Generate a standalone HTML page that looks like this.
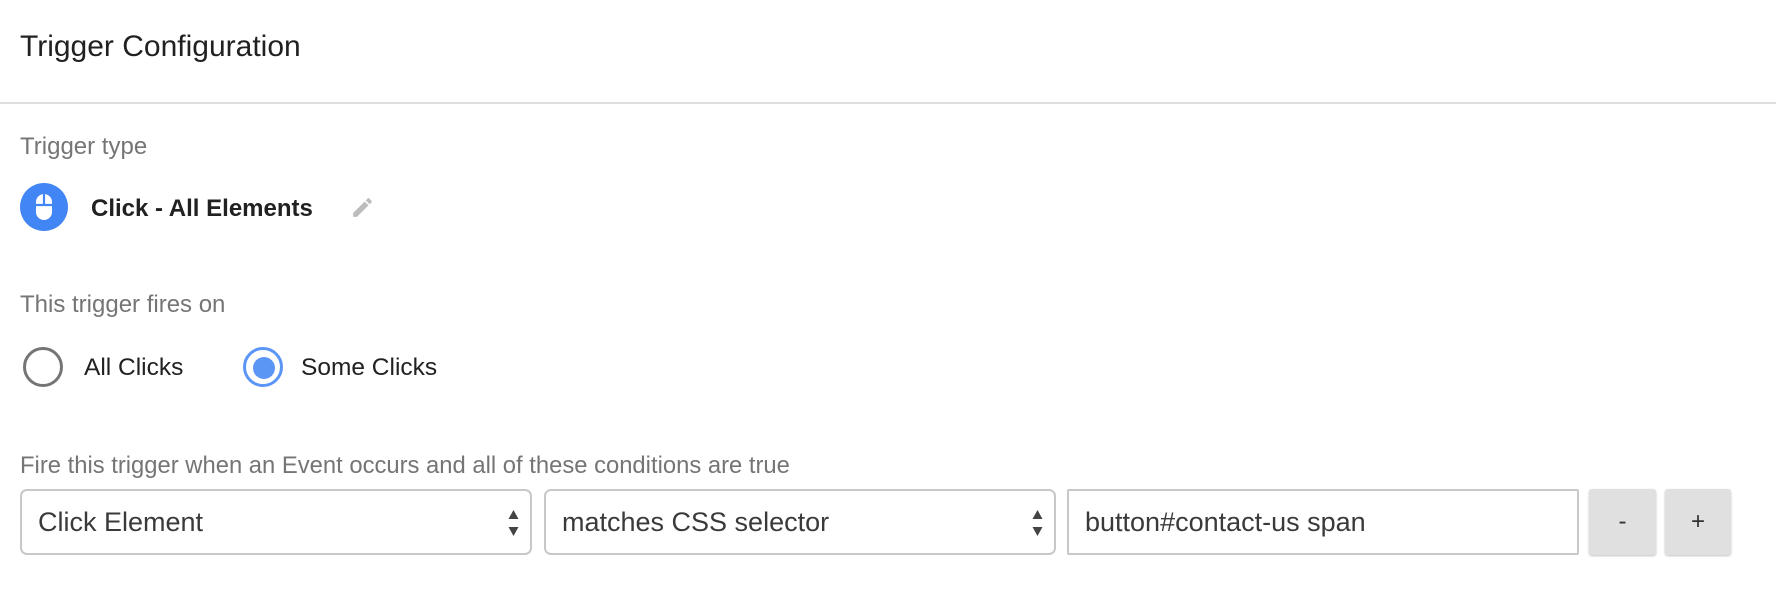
<!DOCTYPE html>
<html><head><meta charset="utf-8"><style>
body{margin:0;width:1776px;height:592px;background:#fff;font-family:"Liberation Sans",sans-serif;position:relative;overflow:hidden}
.a{position:absolute;white-space:nowrap}
.lbl{color:#757575;font-size:24px}
.box{position:absolute;top:489px;height:62px;border:2px solid #c8c8c8;border-radius:7px;background:#fff;box-sizing:content-box}
.box span{position:absolute;left:16px;top:16px;font-size:27px;color:#3a3a3a}
.arr{position:absolute;right:10px;top:17px;width:13px}
.btn{position:absolute;top:489px;height:66px;background:#e0e0e0;border-radius:3px;box-shadow:0 1px 2px rgba(0,0,0,.25);text-align:center;line-height:66px;font-size:24px;color:#333}
</style></head><body>
<div class="a" style="left:20px;top:30px;font-size:30px;color:#212121">Trigger Configuration</div>
<div class="a" style="left:0;top:102px;width:1776px;height:2px;background:#dedede"></div>
<div class="a lbl" style="left:20px;top:133px">Trigger type</div>
<svg class="a" style="left:20px;top:183px" width="48" height="48" viewBox="0 0 48 48"><circle cx="24" cy="24" r="24" fill="#4285f4"/><path d="M16 19a8 8 0 0 1 16 0v10a8 8 0 0 1-16 0z" fill="#fff"/><path d="M16 22h16M24 11v11" stroke="#4285f4" stroke-width="2.2"/></svg>
<div class="a" style="left:91px;top:195px;font-size:24px;font-weight:bold;color:#212121">Click - All Elements</div>
<svg class="a" style="left:350px;top:195px" width="25" height="25" viewBox="0 0 24 24"><path d="M3 17.25V21h3.75L17.8 9.94l-3.75-3.75L3 17.25zM20.7 7.04a1 1 0 0 0 0-1.41l-2.34-2.34a1 1 0 0 0-1.41 0l-1.83 1.83 3.75 3.75 1.83-1.83z" fill="#bdbdbd"/></svg>
<div class="a lbl" style="left:20px;top:291px">This trigger fires on</div>
<div class="a" style="left:23px;top:347px;width:34px;height:34px;border:3.5px solid #757575;border-radius:50%"></div>
<div class="a" style="left:84px;top:354px;font-size:24.5px;color:#212121">All Clicks</div>
<div class="a" style="left:243px;top:347px;width:34px;height:34px;border:3.5px solid #5b95f5;border-radius:50%"></div>
<div class="a" style="left:252.5px;top:356.5px;width:22px;height:22px;background:#5b95f5;border-radius:50%"></div>
<div class="a" style="left:301px;top:354px;font-size:24.5px;color:#212121">Some Clicks</div>
<div class="a lbl" style="left:20px;top:452px;font-size:23.8px">Fire this trigger when an Event occurs and all of these conditions are true</div>
<div class="box" style="left:20px;width:508px"><span>Click Element</span><svg class="arr" viewBox="0 0 12 30" height="30"><path d="M6 2l5 9H1zM6 28l5-9H1z" fill="#444"/></svg></div>
<div class="box" style="left:544px;width:508px"><span>matches CSS selector</span><svg class="arr" viewBox="0 0 12 30" height="30"><path d="M6 2l5 9H1zM6 28l5-9H1z" fill="#444"/></svg></div>
<div class="box" style="left:1067px;width:508px;border-radius:2px"><span>button#contact-us span</span></div>
<div class="btn" style="left:1589px;width:67px">-</div>
<div class="btn" style="left:1665px;width:66px">+</div>
</body></html>
